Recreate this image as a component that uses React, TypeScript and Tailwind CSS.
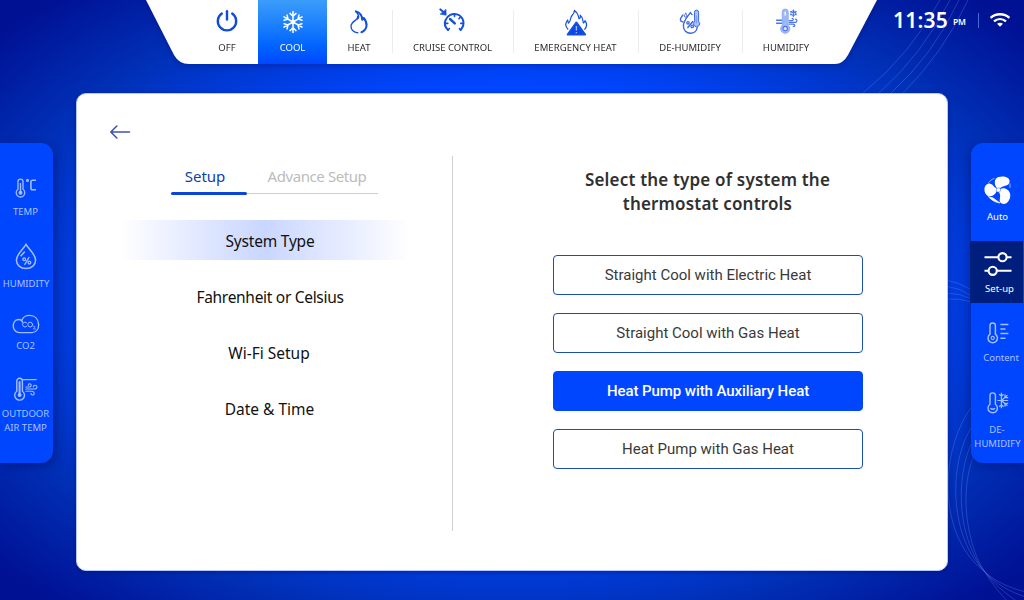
import type { ReactNode } from "react";

const PowerIcon = () => (
  <svg width="22" height="22" viewBox="0 0 22 22" fill="none" stroke="#0f4bd8" strokeWidth="2.4" strokeLinecap="round">
    <path d="M5.8 3.6A9.2 9.2 0 1 0 16.2 3.6" />
    <path d="M11 1.2V9.6" />
  </svg>
);

const SnowIcon = () => (
  <svg width="22" height="24" viewBox="-11 -12 22 24" fill="none" stroke="#fff" strokeWidth="1.5" strokeLinecap="round">
    {[0, 60, 120, 180, 240, 300].map((a) => (
      <path key={a} transform={`rotate(${a})`} d="M0 0V-10.4M-3 -8.6L0 -5.8L3 -8.6" />
    ))}
    <circle r="2.2" fill="#fff" stroke="none" />
  </svg>
);

const FlameIcon = () => (
  <svg width="20" height="24" viewBox="0 0 20 24" fill="none" stroke="#1450dc" strokeLinecap="round" strokeLinejoin="round">
    <path d="M8.6 6.4C9 8.2 8 9.2 6.3 10.4C4 12 2 13.4 2 16.4C2.2 19.8 4.8 22.4 9 22.8" strokeWidth="1.3" />
    <path d="M6.8 1.4C11.6 2.8 13.2 6 13.2 9.8L14.8 8C18.6 12.6 19 19.6 12.4 22.2" strokeWidth="2" />
    <path d="M6.8 1.4C10 4.4 10.4 7.6 8.4 9" strokeWidth="1.5" />
  </svg>
);

const CruiseIcon = () => (
  <svg width="28" height="26" viewBox="0 0 28 26" fill="none" stroke="#1450dc" strokeWidth="2" strokeLinecap="round">
    <path d="M9 22C6 19.2 5.2 15.6 6.4 12.4C8.4 7 13.4 5.2 18 6.4C24.6 8.4 26.8 16.4 21.6 22" />
    <path d="M11 11L15.8 15.4" strokeWidth="2.4" />
    <path d="M15.5 6V8.4M21.4 9.2L20 10.6M24.2 15.4H21.8M6.4 15.4H8.8M9 22L10.4 20.6M21.6 22L20.4 20.6" strokeWidth="1.6" />
    <path d="M1.4 1.4L5 4.4" strokeWidth="2" />
    <path d="M7 1.6L7.2 7.2L1.4 6.2Z" fill="#1450dc" strokeWidth=".6" />
  </svg>
);

const EmergencyIcon = () => (
  <svg width="24" height="28" viewBox="0 0 24 28" fill="none" stroke="#1450dc" strokeWidth="1.2" strokeLinejoin="round">
    <path d="M4.2 20.5C1 17.5 1.2 14 3.6 11L4.4 14.2C7 12.4 5.8 8.6 8.4 6C9.6 4.6 10.4 3.4 10.4 1.4C14.4 4 14.2 7 15 9.8C16.4 9.2 16.6 7.4 16.2 6.2C19.6 8.8 18.4 11.6 19.4 14C20.6 13.4 21 12.6 21 11.6C23.4 15 22.6 18.4 20.4 20.6" />
    <path d="M12.4 13.4L21.2 25.6H3.6Z" fill="#0a46e8" strokeWidth="1.8" />
    <path d="M12.4 17V21.6M12.4 23V24.2" stroke="#9db8ff" strokeWidth="1.4" />
  </svg>
);

const DehumidifyIcon = () => (
  <svg width="22" height="26" viewBox="0 0 22 26" fill="none" stroke="#3b68e4" strokeLinecap="round" strokeLinejoin="round">
    <path d="M13 5.6L11.4 3.6C8.6 7.6 4.4 11.6 4.4 17C4.4 21.2 7.6 24.2 11.4 24.2C15 24.2 17.8 21.8 18.2 18.6" strokeWidth="1.4" />
    <path d="M4 6C2.8 7.6 1.4 8.8 1.4 10.6C1.4 12.2 2.6 13 4 13" strokeWidth="1.3" />
    <path d="M6.8 4.4C6 5.4 5.4 6 5.4 7C5.4 8.6 8 8.6 8 7C8 6 7.4 5.4 6.8 4.4Z" strokeWidth="1" />
    <path d="M15.4 3.2A2.1 2.1 0 0 1 19.6 3.2V12.4A3.1 3.1 0 1 1 15.4 12.4Z" fill="#a9bff8" strokeWidth="1" />
    <path d="M17.5 7V14" stroke="#7f9ff2" strokeWidth="1" />
    <path d="M13.8 12.6L8.8 18.4" strokeWidth="1.5" />
    <circle cx="9" cy="13.8" r="1.2" strokeWidth="1.3" />
    <circle cx="13.2" cy="17.4" r="1.2" strokeWidth="1.3" />
  </svg>
);

const HumidifyIcon = () => (
  <svg width="24" height="26" viewBox="0 0 24 26" fill="none" stroke="#4a76ea" strokeLinecap="round" strokeLinejoin="round">
    <path d="M1.6 12.2H8M1.6 15.2H8" strokeWidth="1.4" />
    <path d="M7.2 4A3 3 0 0 1 13.2 4V17.2A4.6 4.6 0 1 1 7.2 17.2Z" fill="#9db8fa" stroke="#8fadf8" strokeWidth="1" />
    <path d="M10.2 4.4V7" stroke="#eaf0ff" strokeWidth="1.6" />
    <circle cx="10.2" cy="20.6" r="2.2" fill="#dfe8ff" strokeWidth="1.1" />
    <path d="M18.4 2V8.4M15.6 3.6L21.2 6.8M21.2 3.6L15.6 6.8" strokeWidth="1.2" />
    <circle cx="18.4" cy="5.2" r="2.5" strokeWidth=".8" />
    <path d="M14.4 12.6H17C18.6 12.6 18.6 10.4 17.2 10.4M14.4 14.4H20C22.6 14.4 22.4 11 20.4 11.2M14.4 16.2H18C20.6 16.4 20 19 18.2 18.4" strokeWidth="1.2" />
  </svg>
);

const WifiIcon = () => (
  <svg width="22" height="16" viewBox="0 0 22 16" fill="none" stroke="#fff" strokeWidth="2.4">
    <path d="M1.6 5.8C6.8 1 15.2 1 20.4 5.8" />
    <path d="M5 9.4C8.6 6.3 13.4 6.3 17 9.4" />
    <path d="M8 11.8C9.8 10.4 12.2 10.4 14 11.8L11 14.8Z" fill="#fff" stroke="none" />
  </svg>
);

const TempIcon = () => (
  <svg width="22" height="20" viewBox="0 0 22 20" fill="none" stroke="#a3beff" strokeWidth="1.3">
    <path d="M3 3.6A2.5 2.5 0 0 1 8 3.6V11.2A4.3 4.3 0 1 1 3 11.2Z" />
    <path d="M5.5 5V13" strokeWidth="1.4" />
    <circle cx="5.5" cy="14.8" r="2" fill="#a3beff" stroke="none" />
    <circle cx="12.5" cy="2.4" r=".9" />
    <path d="M21 2.2H17.6Q15.9 2.2 15.9 4V10Q15.9 11.8 17.6 11.8H21" strokeWidth="1.6" />
  </svg>
);

const DropIcon = () => (
  <svg width="22" height="27" viewBox="0 0 22 27" fill="none" stroke="#a3beff" strokeWidth="1.5" strokeLinecap="round">
    <path d="M11 1.4C8 6.6 1.4 11.4 1.4 17C1.4 22 5.4 25.6 11 25.6C16.6 25.6 20.6 22 20.6 17C20.6 11.4 14 6.6 11 1.4Z" />
    <path d="M9.4 9L6 12.8" />
    <path d="M14 14.4L9.8 21.4" strokeWidth="1.3" />
    <circle cx="9.2" cy="16.2" r="1.4" strokeWidth="1.3" />
    <circle cx="14.4" cy="19.6" r="1.4" strokeWidth="1.3" />
  </svg>
);

const CloudIcon = () => (
  <svg width="28" height="20" viewBox="0 0 28 20" fill="none" stroke="#a3beff" strokeWidth="1.4" strokeLinecap="round">
    <path d="M10.6 8.2C9.4 4.8 4.4 4.4 2.2 8C0 12.6 1.8 18.4 8 18.6H20C24.6 18.2 26.8 14.4 26.6 10.4C26.2 4.6 22.4 1.4 17.6 1.4C13.8 1.4 10.6 3.4 10 6.2" />
    <g strokeWidth="1">
      <path d="M14.6 8.8A2.4 2.4 0 1 0 14.6 12.4" />
      <circle cx="18.2" cy="10.6" r="2.4" />
      <path d="M21.4 12.4C22.8 11.6 23.4 13 22.4 13.8L21.4 15H23.4" strokeWidth=".8" />
    </g>
  </svg>
);

const OutdoorIcon = () => (
  <svg width="24" height="24" viewBox="0 0 24 24" fill="none" stroke="#a3beff" strokeLinecap="round">
    <path d="M2.8 4A2.8 2.8 0 0 1 8.4 4V14.2A4.9 4.9 0 1 1 2.8 14.2Z" strokeWidth="1.4" />
    <path d="M5.6 5V16" strokeWidth="2" />
    <circle cx="5.6" cy="18" r="2" fill="#a3beff" stroke="none" />
    <path d="M8.4 2.6H22.2" strokeWidth="1.3" />
    <path d="M11.8 10H15.6C17.8 9.8 17.6 6.6 15.6 6.8C14.6 6.9 14.2 7.6 14.4 8.4M11.8 12H20.6C23.8 11.8 23.4 8 20.8 8.2C19.6 8.4 19.2 9 19.4 10M11.8 14.2H17.8C21 14.4 20.8 18.2 18.2 18C17.2 17.8 16.9 17 17 16.2" strokeWidth="1.1" />
  </svg>
);

const FanIcon = () => (
  <svg width="28" height="29" viewBox="0 0 28 29" fill="#fff">
    <path d="M13.4 12.4C9.8 9 9.6 2.6 14.6 1C19 -.2 25.6 .6 25.6 5.6C25.4 10.4 19.4 9.4 16 12.2Z" />
    <path d="M12.6 15.2C10.6 19.8 6.4 21.4 3.2 19.4C-.6 16.8 -.6 9.6 3.8 7.8C8.4 6.6 9.6 11.6 13.2 13Z" />
    <path d="M16.4 13C20 10.8 25.6 13.4 26.2 18.2C26.8 23.8 23 28.6 18.6 27.8C12.6 26.4 18.4 20.4 15 16.6Z" />
    <circle cx="14.4" cy="14" r="2.2" stroke="#0046ff" strokeWidth=".4" />
    <path d="M4.6 6.8C6 4.6 7.8 3.2 10.6 2.4M26 7.4V12" fill="none" stroke="#fff" strokeWidth=".8" opacity=".7" />
    <path d="M4 20.2C7 24 11 26.4 16 27L8.6 21.6" stroke="#fff" strokeWidth=".6" />
  </svg>
);

const SlidersIcon = () => (
  <svg width="28" height="24" viewBox="0 0 28 24" fill="none" stroke="#fff" strokeWidth="2.1">
    <path d="M.5 5.2H14.2M22.8 5.2H27.5M.5 18.8H4.4M13 18.8H27.5" />
    <circle cx="18.5" cy="5.2" r="4.1" />
    <circle cx="8.7" cy="18.8" r="4.1" />
  </svg>
);

const ContentIcon = () => (
  <svg width="22" height="22" viewBox="0 0 22 22" fill="none" stroke="#a3beff" strokeWidth="1.5">
    <path d="M3 3.6A2.7 2.7 0 0 1 8.4 3.6V12.2A4.7 4.7 0 1 1 3 12.2Z" />
    <circle cx="5.7" cy="16" r="1.6" strokeWidth="1.1" />
    <path d="M13.4 2.4H21.4M13.4 7H18.4M13.4 11.6H21.4M13.4 16.2H18.4" />
  </svg>
);

const ThermoSnowIcon = () => (
  <svg width="22" height="22" viewBox="0 0 22 22" fill="none" stroke="#a3beff" strokeWidth="1.4">
    <path d="M3 3.6A2.7 2.7 0 0 1 8.4 3.6V12.2A4.7 4.7 0 1 1 3 12.2Z" />
    <path d="M3.4 16.2C4.8 17.4 6.6 17.4 8 16.2" />
    <path d="M14.4 .8V16.2M10.4 8.5H21.2M14.4 8.5L20.4 3.2M14.4 8.5L20.4 13.8M12.2 2.2L14.4 4.2L16.6 2.2M12.2 14.8L14.4 12.8L16.6 14.8M18 2.6V5.4L21.2 5.6M18 14.4V11.6L21.2 11.4" strokeWidth="1.2" />
  </svg>
);

const modes: { label: string; icon: ReactNode; box: string; iconBox?: string }[] = [
  { label: "OFF", icon: <PowerIcon />, box: "w-[62px]", iconBox: "pb-[2px]" },
  { label: "COOL", icon: <SnowIcon />, box: "w-[69px] bg-linear-to-b from-[#3b9dfa] to-[#0046ff] text-white" },
  { label: "HEAT", icon: <FlameIcon />, box: "w-[65px] pr-[1px]" },
  { label: "CRUISE CONTROL", icon: <CruiseIcon />, box: "w-[121px]", iconBox: "pb-[3px]" },
  { label: "EMERGENCY HEAT", icon: <EmergencyIcon />, box: "w-[125px] tracking-[0.07px]", iconBox: "pt-[2px]" },
  { label: "DE-HUMIDIFY", icon: <DehumidifyIcon />, box: "w-[104px]" },
  { label: "HUMIDIFY", icon: <HumidifyIcon />, box: "w-[88px]", iconBox: "pb-[2px] pl-[2px]" },
];

const menu = [
  { label: "System Type", style: "tracking-[-0.2px] bg-[linear-gradient(90deg,#c9d6ff00_0%,#c9d6ff_48%,#c9d6ff00_97%)]" },
  { label: "Fahrenheit or Celsius", style: "tracking-[-0.3px]" },
  { label: "Wi-Fi Setup", style: "pr-[2px]" },
  { label: "Date & Time", style: "pr-[1px]" },
];

const options = [
  { label: "Straight Cool with Electric Heat" },
  { label: "Straight Cool with Gas Heat" },
  { label: "Heat Pump with Auxiliary Heat", active: true },
  { label: "Heat Pump with Gas Heat" },
];

function SideItem({ icon, label, className }: { icon: ReactNode; label: string; className: string }) {
  return (
    <button className={`flex w-full flex-col items-center ${className}`}>
      {icon}
      <span>{label}</span>
    </button>
  );
}

export default function App() {
  return (
    <div className="relative h-[600px] w-[1024px] overflow-hidden bg-[radial-gradient(713px_431px_at_512px_300px,#004bff_0%,#0046ff_50%,#0030b6_75%,#001194_95%)] font-['Noto_Sans','Open_Sans',sans-serif]">
      <svg className="absolute inset-0" width="1024" height="600" fill="none" stroke="#7fa0ff" strokeOpacity=".27">
        <path d="M940 0Q910 55 863 93M950 0Q922 55 879 93M959 0Q934 54 891 93M968 0Q944 52 903 93" />
        <path d="M946 280Q958 282 972 290M946 286Q960 288 972 296M946 293Q960 293 972 299M946 299Q960 298 972 302" />
        <path d="M972 406C942 448 942 510 962 545C970 560 978 566 985 572C996 582 1010 588 1026 592" />
        <path d="M972 426C950 462 952 515 968 548C974 560 980 566 985 572C996 584 1010 592 1026 597" />
        <path d="M973 440C957 472 958 520 972 550C976 560 980 566 985 572C994 584 1006 594 1018 602" />
        <path d="M973 458C962 486 965 525 975 552C978 561 981 566 985 572C992 584 1000 593 1008 602" />
      </svg>

      <div className="relative flex h-full flex-col">
        <header className="flex h-[93px] items-start justify-between">
          <div className="drop-shadow-[0_1px_3px_rgba(0,10,90,0.35)]">
            <nav className="flex h-16 w-[878px] bg-white pl-[196px] text-[9.5px] leading-[13px] text-[#2b2b2b] [clip-path:path('M146_0L174_55Q179_64_189_64H835Q843_64_848_55L877_0Z')]">
              {modes.map((m, i) => (
                <div key={m.label} className="flex">
                  <button className={`flex h-16 flex-col items-center pt-[9px] whitespace-nowrap ${m.box}`}>
                    <span className={`box-border flex h-[26px] items-center justify-center ${m.iconBox ?? ""}`}>{m.icon}</span>
                    <span className="mt-[6px]">{m.label}</span>
                  </button>
                  {i > 1 && i < 6 && <span className="mt-[10px] -mr-px h-[43px] w-px bg-[#ececee]" />}
                </div>
              ))}
            </nav>
          </div>
          <div className="flex items-center pt-[6px] pr-[13px] text-white">
            <span className="text-[21px] leading-[28px] font-semibold tracking-[0.2px]">11:35</span>
            <span className="ml-[5px] pt-[4px] text-[8.5px] leading-[12px] font-semibold">PM</span>
            <span className="mr-[10px] ml-[12px] h-[15px] w-px bg-[#4a6ad0]" />
            <WifiIcon />
          </div>
        </header>

        <div className="flex items-start justify-between">
          <aside className="mt-[50px] h-[320px] w-[53px] rounded-r-[12px] bg-[#0046ff] pt-[35px] text-[9.5px] leading-[13px] whitespace-nowrap text-[#a9c2ff] shadow-[3px_3px_10px_rgba(0,10,90,0.4)]">
            <SideItem icon={<TempIcon />} label="TEMP" className="gap-[7px] pr-[2px]" />
            <SideItem icon={<DropIcon />} label="HUMIDITY" className="mt-[25px] gap-[7px] pr-[1px]" />
            <SideItem icon={<CloudIcon />} label="CO2" className="mt-[24px] gap-[5px] pr-[2px]" />
            <div className="mt-[25px] flex flex-col items-center pr-[2px] text-center leading-[14px]">
              <OutdoorIcon />
              <span className="mt-[6px]">OUTDOOR</span>
              <span>AIR TEMP</span>
            </div>
          </aside>

          <main className="flex h-[478px] w-[872px] rounded-[10px] border border-[#b4c8ff] bg-white shadow-[0_1px_4px_rgba(0,10,90,0.45)]">
            <section className="flex w-[375px] flex-col pt-[30px] text-[15px]">
              <button className="ml-[32px] h-[16px] w-[22px]">
                <svg width="22" height="16" viewBox="0 0 22 16" fill="none" stroke="#3c53ae" strokeWidth="1.6" strokeLinecap="round" strokeLinejoin="round">
                  <path d="M20.5 8H1.8M7.8 2L1.8 8L7.8 14" />
                </svg>
              </button>
              <div className="mt-[26px] ml-[94px] flex h-[30px] w-[207px] leading-[20px]">
                <button className="flex h-[29px] w-[76px] flex-col justify-between text-[#0f3fae]">
                  <span className="w-[68px] text-center">Setup</span>
                  <span className="h-[3px] w-[76px] rounded-full bg-[#0b45dc]" />
                </button>
                <button className="flex h-[28px] flex-1 flex-col items-center border-b border-[#cfcfcf] pl-[9px] tracking-[-0.42px] text-[#bcbcbc]">
                  Advance Setup
                </button>
              </div>
              <ul className="mt-[24px] ml-[44px] flex w-[298px] flex-col gap-4 pt-0 text-center text-[15.5px] leading-[40px] text-[#111]">
                {menu.map((item) => (
                  <li key={item.label} className={`h-10 pt-px ${item.style}`}>
                    {item.label}
                  </li>
                ))}
              </ul>
            </section>
            <div className="mt-[62px] h-[375px] w-px bg-[#d0d0d0]" />
            <section className="flex flex-1 flex-col items-center pt-[74px] pl-[15px]">
              <h1 className="text-center text-[17px] leading-[24px] font-semibold tracking-[0.18px] text-[#303030]">
                Select the type of system the
                <br />
                thermostat controls
              </h1>
              <div className="mt-[39px] flex w-[310px] flex-col gap-[18px] font-['Roboto',sans-serif] text-[15px]">
                {options.map((o) => (
                  <button
                    key={o.label}
                    className={`h-10 rounded-[4px] border pl-px ${o.active ? "border-[#0046ff] bg-[#0046ff] font-medium tracking-[-0.07px] text-white" : "border-[#1a4fae] bg-white text-[#3a3a3a]"}`}
                  >
                    {o.label}
                  </button>
                ))}
              </div>
            </section>
          </main>

          <aside className="mt-[50px] h-[320px] w-[53px] rounded-l-[12px] bg-[#0046ff] pt-[33px] text-[9.5px] leading-[13px] whitespace-nowrap text-[#a9c2ff] shadow-[-2px_3px_8px_rgba(0,10,90,0.35)]">
            <SideItem icon={<FanIcon />} label="Auto" className="gap-[5px] text-white" />
            <button className="mt-[18px] -ml-px flex h-[62px] w-[53px] flex-col items-center bg-[#001f7d] pt-[11px] pl-[2px] text-white">
              <SlidersIcon />
              <span className="mt-[6px] pl-[4px]">Set-up</span>
            </button>
            <button className="mt-[19px] flex w-full flex-col items-center">
              <ContentIcon />
              <span className="mt-[7px] pl-[7px]">Content</span>
            </button>
            <div className="mt-[28px] flex flex-col items-center leading-[14px]">
              <ThermoSnowIcon />
              <span className="mt-[9px] pr-[1px]">DE-</span>
              <span>HUMIDIFY</span>
            </div>
          </aside>
        </div>
      </div>
    </div>
  );
}
